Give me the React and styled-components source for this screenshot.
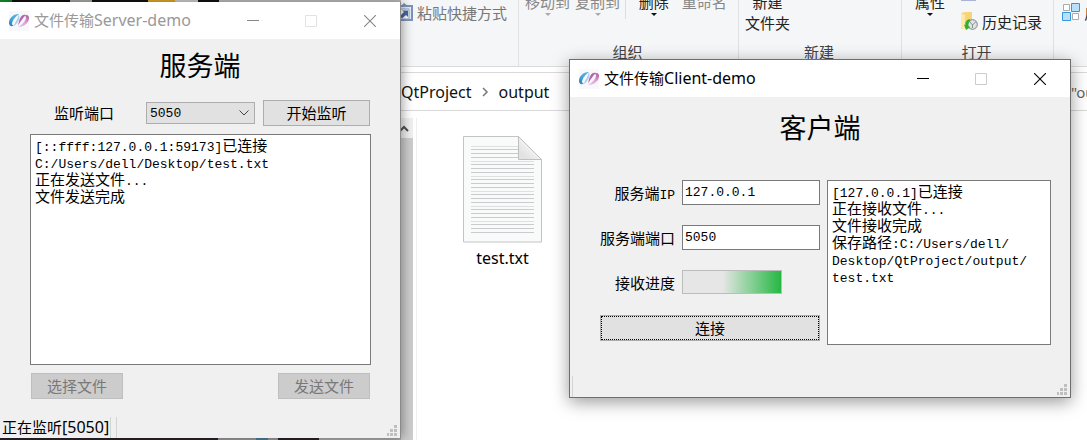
import React from 'react';
import styled, { createGlobalStyle } from 'styled-components';

const ui = '"Noto Sans", "Noto Sans CJK SC", sans-serif';
const song = '"Liberation Mono", "Noto Sans CJK SC", monospace';

const Global = createGlobalStyle`
  * { box-sizing: border-box; }
  body { margin: 0; font-family: ${ui}; font-size: 15px; color: #000; }
  button, input, select { font: inherit; color: inherit; margin: 0; padding: 0; border-radius: 0; }
  svg { display: block; flex: none; }
`;

const Desktop = styled.div`
  position: relative;
  min-height: 100vh;
  overflow: hidden;
  display: flex;
  flex-direction: column;
  background: #fff;
`;

/* File explorer */
const Ribbon = styled.div`
  display: flex;
  height: 67px;
  overflow: hidden;
  background: #f5f6f7;
  border-bottom: 1px solid #dadbdc;
`;
const Group = styled.section`
  display: flex;
  flex-direction: column;
  justify-content: flex-end;
  flex: ${p => (p.$width ? `0 0 ${p.$width}px` : '1 1 0')};
  padding-bottom: 4px;
  border-right: ${p => (p.$width ? '1px solid #e0e1e3' : '0')};
  min-width: 0;
`;
const Tools = styled.div`
  display: flex;
  flex: none;
  height: 50px;
  gap: ${p => p.$gap || 0}px;
  padding-left: ${p => p.$left || 6}px;
  justify-content: ${p => (p.$end ? 'flex-end' : 'flex-start')};
  padding-right: ${p => (p.$end ? 11 : 0)}px;
`;
const Caption = styled.div`
  flex: none;
  height: 20px;
  line-height: 20px;
  padding-right: 2px;
  text-align: center;
  color: #444;
`;
const Tool = styled.button`
  display: flex;
  flex-direction: column;
  align-items: center;
  flex: none;
  border: 0;
  background: none;
  line-height: 21px;
  white-space: nowrap;
  color: ${p => (p.disabled ? '#888' : '#222')};
`;
const SmallTool = styled.button`
  display: flex;
  align-items: center;
  flex: none;
  gap: 4px;
  height: 24px;
  border: 0;
  background: none;
  white-space: nowrap;
  color: ${p => (p.disabled ? '#777' : '#222')};
`;
const Stack = styled.div`
  display: flex;
  flex-direction: column;
  flex: none;
  padding-top: 8px;
`;
const OpenStack = styled(Stack)`
  padding-top: 0;
  gap: 8px;
`;
const Sliver = styled.span`
  width: 15px;
  height: 9px;
  background: #aab5d4;
`;
const ShortRule = styled.span`
  width: 1px;
  height: 27px;
  background: #dcdddf;
`;
const AddressRow = styled.div`
  display: flex;
  justify-content: space-between;
  flex: none;
  height: 39px;
  margin-top: 5px;
  padding-left: 401px;
  border: solid #d9d9d9;
  border-width: 1px 0;
`;
const Crumbs = styled.nav`
  display: flex;
  align-items: center;
  gap: 10px;
  font-size: 16px;
  a { color: #111; text-decoration: none; }
`;
const SearchBox = styled.input`
  flex: 0 0 16px;
  width: 16px;
  border: 0;
  outline: 0;
  background: none;
  &::placeholder { color: #666; opacity: 1; }
`;
const Pane = styled.div`
  display: flex;
  flex: 1;
  padding-top: 7px;
`;
const Tree = styled.div`
  display: flex;
  justify-content: flex-end;
  flex: 0 0 417px;
  padding-right: 3px;
  border-right: 1px solid #eee;
`;
const ScrollBar = styled.div`
  width: 17px;
  display: flex;
  flex-direction: column;
  background: #f0f0f0;
`;
const ScrollHead = styled.button`
  height: 20px;
  border: 0;
  padding: 0 0 0 3px;
  background: #f0f0f0;
`;
const Thumb = styled.div`
  flex: 1;
  background: #cdcdcd;
`;
const Files = styled.div`
  padding: 18px 0 0 46px;
`;
const FileItem = styled.figure`
  display: flex;
  flex-direction: column;
  align-items: center;
  gap: 5px;
  margin: 0;
  figcaption { font-size: 16px; line-height: 20px; }
`;

/* Dialog windows */
const Window = styled.section`
  position: absolute;
  display: flex;
  flex-direction: column;
  background: #f0f0f0;
`;
const ServerWindow = styled(Window)`
  left: 0;
  top: 2px;
  bottom: 2px;
  width: 401px;
  border-right: 1px solid #8a8a8a;
  box-shadow: 2px 0 10px rgba(0, 0, 0, 0.35);
`;
const ClientWindow = styled(Window)`
  left: 569px;
  top: 59px;
  width: 502px;
  border: 1px solid #6e6e6e;
  box-shadow: 0 4px 16px rgba(0, 0, 0, 0.4);
`;
const TitleBar = styled.header`
  display: flex;
  align-items: center;
  flex: none;
  height: 37px;
  padding-left: 9px;
  gap: 5px;
  background: #fff;
  color: ${p => (p.$active ? '#000' : '#999')};
`;
const Title = styled.span`
  flex: 1;
  line-height: 20px;
  padding-bottom: 2px;
  white-space: nowrap;
`;
const Latin = styled.span`
  font-size: 16px;
`;
const Controls = styled.div`
  display: flex;
`;
const Control = styled.button`
  display: grid;
  place-items: center;
  width: 58px;
  height: 36px;
  border: 0;
  background: none;
`;
const CloseControl = styled(Control)`
  width: 60px;
`;
const Heading = styled.h1`
  flex: none;
  margin: 0;
  font-size: 27px;
  font-weight: 400;
  text-align: center;
  line-height: ${p => p.$line}px;
`;
const Content = styled.div`
  display: flex;
  flex-direction: column;
  flex: 1;
  gap: 8px;
  padding: 8px 29px 17px 30px;
`;
const Row = styled.div`
  display: flex;
  justify-content: space-between;
  flex: none;
  height: 26px;
  padding: 0 1px;
`;
const PortRow = styled(Row)`
  align-items: center;
  padding-left: 24px;
  label { line-height: 20px; }
`;
const Combo = styled.div`
  position: relative;
  width: 109px;
  height: 22px;
  margin-left: 24px;
  svg { position: absolute; right: 6px; top: 8px; pointer-events: none; }
  select {
    appearance: none;
    display: block;
    width: 100%;
    height: 22px;
    padding-left: 3px;
    border: 1px solid #adadad;
    background: #e1e1e1;
    font-family: ${song};
    font-size: 13px;
  }
`;
const PushButton = styled.button`
  width: ${p => p.$width}px;
  height: 26px;
  border: 1px solid ${p => (p.disabled ? '#bfbfbf' : '#adadad')};
  background: ${p => (p.disabled ? '#ccc' : '#e1e1e1')};
  color: ${p => (p.disabled ? '#787878' : '#000')};
  line-height: 22px;
`;
const ConnectButton = styled(PushButton)`
  grid-column: 1 / 3;
  width: auto;
  outline: 1px dotted #000;
  outline-offset: -2px;
`;
const Log = styled.div`
  flex: 1;
  min-width: 0;
  padding: 4px;
  border: 1px solid #7a7a7a;
  background: #fff;
  font-family: ${song};
  p { margin: 0; line-height: 17px; }
`;
const Mono = styled.span`
  font-family: ${song};
  font-size: 13px;
`;
const Form = styled.form`
  display: grid;
  grid-template-columns: 75px 1fr;
  column-gap: 7px;
  row-gap: 20px;
  grid-auto-rows: 25px;
  flex: 0 0 220px;
  label { text-align: right; line-height: 26px; white-space: nowrap; }
`;
const TextBox = styled.input`
  width: 100%;
  min-width: 0;
  padding-left: 2px;
  border: 1px solid #7a7a7a;
  background: #fff;
  font-family: ${song};
  font-size: 13px;
`;
const Progress = styled.progress`
  appearance: none;
  width: 100px;
  height: 24px;
  border: 1px solid #bcbcbc;
  background: #e6e6e6;
  &::-webkit-progress-bar { background: #e6e6e6; }
  &::-webkit-progress-value { background: linear-gradient(90deg, #e6e6e6 40%, #26b843); }
`;
const ClientBody = styled.div`
  display: flex;
  gap: 7px;
  min-height: 165px;
  padding: 0 19px 0 30px;
  margin: 21px 0 30px;
`;
const StatusBar = styled.footer`
  display: flex;
  align-items: center;
  gap: 1px;
  flex: none;
  height: 22px;
  padding: 0 2px;
  line-height: 20px;
`;
const Divider = styled.span`
  width: 1px;
  height: 21px;
  margin-right: 4px;
  background: #d4d4d4;
`;
const Grip = styled.svg`
  align-self: flex-end;
  margin: 0 0 1px auto;
`;
const Strip = styled.div`
  position: absolute;
  left: 0;
  width: 401px;
  height: 2px;
`;
const TopStrip = styled(Strip)`
  top: 0;
  background: linear-gradient(90deg, #14882a 0 12px, #111 12px 70px, #aaa 70px 92px, #111 92px 148px, #dba92a 148px 175px, #ccc 175px 198px, #111 198px 219px, #bbb 219px);
`;
const BottomStrip = styled(Strip)`
  bottom: 0;
  background: linear-gradient(90deg, #2a2228 0 218px, #999 218px 256px, #4a809a 256px 268px, #999 268px 278px, #2a2228 278px 319px, #aaa 319px);
`;

const Logo = () => (
  <svg width="20" height="20" viewBox="0 0 20 20" aria-hidden="true">
    <defs>
      <linearGradient id="logoBlue" x1="0" y1="1" x2="1" y2="0">
        <stop offset="0" stopColor="#2f76b5" />
        <stop offset="0.500" stopColor="#4aa9dd" />
        <stop offset="1" stopColor="#5fb4e4" />
      </linearGradient>
      <linearGradient id="logoPink" x1="0" y1="1" x2="1" y2="0">
        <stop offset="0" stopColor="#ecc8ee" />
        <stop offset="0.550" stopColor="#dfa0d2" />
        <stop offset="1" stopColor="#a0559c" />
      </linearGradient>
    </defs>
    <rect width="20" height="20" fill="#f8f8fa" />
    <path d="M10 3C5 2.500 0 7 0 12c0 3 2.500 4 5 2.500-1.800-.2-2.400-1.500-1.600-3.500C4.500 8 7 5 10 3z" fill="url(#logoBlue)" />
    <path d="M5 15c2.500-1.500 3.800-4 5-6.500.8-2 .6-3.600-.6-5C9.500 6 8 8.500 6.500 11 5.800 12.500 5 14 5 15z" fill="#a5cff0" />
    <path d="M9 16c5 .6 11-4 11-9 0-2.800-2.500-3.800-5-2.200 1.800.2 2.400 1.200 1.700 3.200C15.600 11 12.500 14 9 16z" fill="url(#logoPink)" />
    <path d="M17 4c-3-.8-5 .8-6 3.500-1 2-1.600 4.500-1.600 7C10.300 12 12 10 13.500 8c.9-1.600 2.200-3 3.500-4z" fill="#b566ae" />
  </svg>
);

const WindowControls = ({ color, box }) => (
  <Controls>
    <Control aria-label="最小化">
      <svg width="12" height="12" viewBox="0 0 12 12"><path d="M0 5.500h12" stroke={color} /></svg>
    </Control>
    <Control aria-label="最大化" disabled>
      <svg width="12" height="12" viewBox="0 0 12 12"><path d="M.5.5h11v11H.5z" fill="none" stroke={box} /></svg>
    </Control>
    <CloseControl aria-label="关闭">
      <svg width="12" height="12" viewBox="0 0 12 12"><path d="M0 0l12 12M12 0L0 12" stroke={color} strokeWidth="1.100" /></svg>
    </CloseControl>
  </Controls>
);

const SizeGrip = () => (
  <Grip width="12" height="12" viewBox="0 0 12 12" fill="#bfbfbf" aria-hidden="true">
    <path d="M8 0h3v3H8zM4 4h3v3H4zM8 4h3v3H8zM1 8h2v3H1zM4 8h3v3H4zM8 8h3v3H8z" />
  </Grip>
);

const Arrow = ({ color }) => (
  <svg width="6" height="3" viewBox="0 0 6 3"><path d="M0 0h6L3 3z" fill={color} /></svg>
);

const HistoryIcon = () => (
  <svg width="17" height="18" viewBox="0 0 17 18" aria-hidden="true">
    <path d="M0 1l4-1h7v16H3l-3 1z" fill="#f6d477" />
    <path d="M0 1l4 2v15l-4-2z" fill="#ffe9a4" />
    <circle cx="11.500" cy="12.500" r="4.800" fill="#e0e4e4" stroke="#7c8484" />
    <path d="M9 10l2.500 3L15 9.500M11.500 13v3" fill="none" stroke="#8a9090" />
    <path d="M8.500 7C5 8 4 10.500 4.500 13L3 12.500 5 18l4.500-3-2-.5C7 12 7.500 10 9.500 9z" fill="#2fb02f" />
  </svg>
);

const PasteIcon = () => (
  <svg width="17" height="18" viewBox="0 0 17 18" aria-hidden="true">
    <path d="M1 3h15v14H1z" fill="#e4ecf6" stroke="#7d93bd" strokeWidth="2" />
    <path d="M5 3l3-3 4 3z" fill="#8193b4" />
    <path d="M3 6h10v10H3z" fill="#fff" stroke="#90a4c8" />
    <path d="M4 13l4-4-2-1.500h6V14l-2-2-4 3.500z" fill="#47699f" />
  </svg>
);

const SelectIcon = () => (
  <svg width="18" height="18" viewBox="0 0 18 18" aria-hidden="true">
    <g fill="#fff" stroke="#aaa"><path d="M1.500 1.500h6v6h-6zM10.500 10.500h6v6h-6z" /></g>
    <g fill="#b9e0fb" stroke="#3595e0"><path d="M9.500.5h8v8h-8zM.5 9.500h8v8h-8z" /></g>
  </svg>
);

const lines = [10, 13, 17, 21, 25, 28, 32, 36, 40, 43, 47, 51, 55, 58, 62, 66, 70, 73, 77, 81, 85, 88, 92, 96];
const TextFileIcon = () => (
  <svg width="79" height="107" viewBox="0 0 79 107" aria-hidden="true">
    <defs>
      <linearGradient id="fold" x1="0" y1="1" x2="1" y2="0">
        <stop offset="0.200" stopColor="#e2e2e2" />
        <stop offset="0.600" stopColor="#f5f5f5" />
      </linearGradient>
    </defs>
    <path d="M.5.5h55l23 23v82.500H.5z" fill="#f9fafa" stroke="#c2c4c5" />
    {lines.map((y, i) => (
      <path key={y} d={`M8 ${y + 0.5}H${y < 24 ? 55 : 71}`} stroke={i % 4 === 0 ? '#dddfe0' : '#c9cbcc'} />
    ))}
    <path d="M55.500.5v23h23z" fill="url(#fold)" stroke="#bdbfc0" />
  </svg>
);

export default function App() {
  return (
    <Desktop>
      <Global />
      <Ribbon>
        <Group $width={519}>
          <Tools $end>
            <Stack><SmallTool disabled><PasteIcon />粘贴快捷方式</SmallTool></Stack>
          </Tools>
          <Caption />
        </Group>
        <Group $width={220}>
          <Tools $gap={5}>
            <Tool disabled>移动到<Arrow color="#aaa" /></Tool>
            <Tool disabled>复制到<Arrow color="#aaa" /></Tool>
            <ShortRule />
            <Tool>&nbsp;&nbsp;删除&nbsp;&nbsp;<Arrow color="#111" /></Tool>
            <Tool disabled>重命名</Tool>
          </Tools>
          <Caption>组织</Caption>
        </Group>
        <Group $width={163}>
          <Tools>
            <Tool>新建<span>文件夹</span></Tool>
          </Tools>
          <Caption>新建</Caption>
        </Group>
        <Group $width={152}>
          <Tools $left={13} $gap={16}>
            <Tool>属性<Arrow color="#111" /></Tool>
            <OpenStack>
              <Sliver />
              <SmallTool><HistoryIcon />历史记录</SmallTool>
            </OpenStack>
          </Tools>
          <Caption>打开</Caption>
        </Group>
        <Group>
          <Tools $left={8}>
            <Stack><SmallTool><SelectIcon />反向选择</SmallTool></Stack>
          </Tools>
          <Caption />
        </Group>
      </Ribbon>
      <AddressRow>
        <Crumbs>
          <a href="#project">QtProject</a>
          <svg width="7" height="10" viewBox="0 0 7 10"><path d="M1 1l4 4-4 4" fill="none" stroke="#777" strokeWidth="1.500" /></svg>
          <a href="#output">output</a>
        </Crumbs>
        <SearchBox aria-label="搜索" placeholder={'"output"'} />
      </AddressRow>
      <Pane>
        <Tree>
          <ScrollBar>
            <ScrollHead aria-label="向上滚动">
              <svg width="10" height="7" viewBox="0 0 10 7"><path d="M1 6l4-4 4 4" fill="none" stroke="#505050" strokeWidth="2" /></svg>
            </ScrollHead>
            <Thumb />
          </ScrollBar>
        </Tree>
        <Files>
          <FileItem>
            <TextFileIcon />
            <figcaption>test.txt</figcaption>
          </FileItem>
        </Files>
      </Pane>

      <TopStrip />
      <BottomStrip />
      <ServerWindow>
        <TitleBar>
          <Logo />
          <Title>文件传输<Latin>Server-demo</Latin></Title>
          <WindowControls color="#888" box="#e2e2e2" />
        </TitleBar>
        <Heading $line={53}>服务端</Heading>
        <Content>
          <PortRow>
            <label htmlFor="port">监听端口</label>
            <Combo>
              <select id="port" defaultValue="5050"><option>5050</option></select>
              <svg width="10" height="6" viewBox="0 0 10 6"><path d="M.5.5L5 5 9.500.5" fill="none" stroke="#444" /></svg>
            </Combo>
            <PushButton $width={107}>开始监听</PushButton>
          </PortRow>
          <Log role="log">
            <p><Mono>[::ffff:127.0.0.1:59173]</Mono>已连接</p>
            <p><Mono>C:/Users/dell/Desktop/test.txt</Mono></p>
            <p>正在发送文件<Mono>...</Mono></p>
            <p>文件发送完成</p>
          </Log>
          <Row>
            <PushButton $width={92} disabled>选择文件</PushButton>
            <PushButton $width={92} disabled>发送文件</PushButton>
          </Row>
        </Content>
        <StatusBar>
          <span>正在监听<Latin>[5050]</Latin></span>
          <Divider />
          <Divider />
          <SizeGrip />
        </StatusBar>
      </ServerWindow>

      <ClientWindow>
        <TitleBar $active>
          <Logo />
          <Title>文件传输<Latin>Client-demo</Latin></Title>
          <WindowControls color="#000" box="#ccc" />
        </TitleBar>
        <Heading $line={62}>客户端</Heading>
        <ClientBody>
          <Form onSubmit={e => e.preventDefault()}>
            <label htmlFor="ip">服务端<Mono>IP</Mono></label>
            <TextBox id="ip" defaultValue="127.0.0.1" />
            <label htmlFor="serverPort">服务端端口</label>
            <TextBox id="serverPort" defaultValue="5050" />
            <label htmlFor="progress">接收进度</label>
            <Progress id="progress" value="100" max="100" />
            <ConnectButton type="submit">连接</ConnectButton>
          </Form>
          <Log role="log">
            <p><Mono>[127.0.0.1]</Mono>已连接</p>
            <p>正在接收文件<Mono>...</Mono></p>
            <p>文件接收完成</p>
            <p>保存路径<Mono>:C:/Users/dell/<wbr />Desktop/QtProject/output/<wbr />test.txt</Mono></p>
          </Log>
        </ClientBody>
        <StatusBar>
          <Divider />
          <SizeGrip />
        </StatusBar>
      </ClientWindow>
    </Desktop>
  );
}
